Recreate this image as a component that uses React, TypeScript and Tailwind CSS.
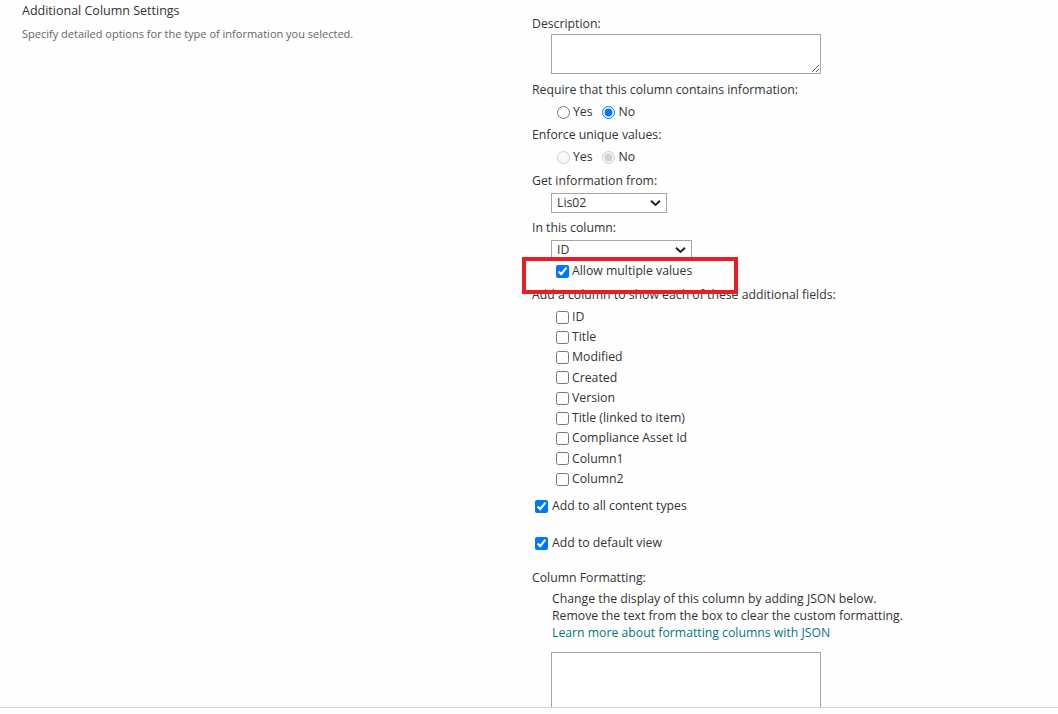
import React from 'react';

const fields = [
  'ID',
  'Title',
  'Modified',
  'Created',
  'Version',
  'Title (linked to item)',
  'Compliance Asset Id',
  'Column1',
  'Column2',
];

const Chevron = () => (
  <svg
    className="pointer-events-none absolute right-[6px] top-1/2 -translate-y-1/2"
    width="11"
    height="7"
    viewBox="0 0 11 7"
  >
    <path d="M1 1.2 L5.5 5.4 L10 1.2" fill="none" stroke="#222" strokeWidth="2" />
  </svg>
);

const Select = ({ value, width }: { value: string; width: string }) => (
  <div className={`relative ml-[19px] h-[20px] ${width}`}>
    <select
      defaultValue={value}
      className="h-full w-full appearance-none border border-[#a6a6a6] bg-white pl-[5px] text-[12.25px] leading-none text-[#333] outline-none"
    >
      <option>{value}</option>
    </select>
    <Chevron />
  </div>
);

const App: React.FC = () => {
  return (
    <div
      className="h-[714px] overflow-hidden bg-[#fefefe] text-[#333]"
      style={{ fontFamily: '"Open Sans", "Noto Sans", sans-serif' }}
    >
      <div className="flex h-[708px] overflow-hidden border-b border-[#d4d4d4]">
        {/* Section description */}
        <div className="w-[532px] shrink-0 pl-[22px] pt-[2px]">
          <h3 className="h-[18px] text-[12.5px] leading-[18px] text-[#333]">
            Additional Column Settings
          </h3>
          <p className="mt-[7px] text-[11px] leading-[14px] text-[#666]">
            Specify detailed options for the type of information you selected.
          </p>
        </div>

        {/* Form fields */}
        <div className="relative flex-1 pt-[14px] text-[12.25px]">
          <div className="flex h-[20px] items-center">Description:</div>
          <textarea className="ml-[19px] mt-[0px] block h-[40px] w-[270px] border border-[#a6a6a6] bg-white outline-none" />

          <div className="mt-[5px] flex h-[22px] items-center">
            Require that this column contains information:
          </div>
          <div className="flex h-[22px] items-center pl-[25px]">
            <input type="radio" name="req" className="m-0 h-[13px] w-[13px]" />
            <span className="ml-[3px]">Yes</span>
            <input type="radio" name="req" defaultChecked className="m-0 ml-[9px] h-[13px] w-[13px]" />
            <span className="ml-[4px]">No</span>
          </div>

          <div className="mt-[1px] flex h-[22px] items-center">Enforce unique values:</div>
          <div className="flex h-[22px] items-center pl-[25px]">
            <input type="radio" name="uniq" disabled className="m-0 h-[13px] w-[13px]" />
            <span className="ml-[3px]">Yes</span>
            <input type="radio" name="uniq" disabled defaultChecked className="m-0 ml-[9px] h-[13px] w-[13px]" />
            <span className="ml-[4px]">No</span>
          </div>

          <div className="mt-[2px] flex h-[22px] items-center">Get information from:</div>
          <div className="mt-[1px]">
            <Select value="Lis02" width="w-[116px]" />
          </div>

          <div className="mt-[4px] flex h-[22px] items-center">In this column:</div>
          <div className="mt-[1px]">
            <Select value="ID" width="w-[141px]" />
          </div>
          <div className="flex h-[22px] items-center pl-[24px]">
            <input type="checkbox" defaultChecked className="m-0 h-[13px] w-[13px]" />
            <span className="ml-[3px]">Allow multiple values</span>
          </div>

          <div className="mt-[2px] flex h-[22px] items-center">
            Add a column to show each of these additional fields:
          </div>
          <div className="mt-[1px]">
            {fields.map((f) => (
              <div key={f} className="flex h-[20.25px] items-center pl-[24px]">
                <input type="checkbox" className="m-0 h-[13px] w-[13px]" />
                <span className="ml-[3px]">{f}</span>
              </div>
            ))}
          </div>

          <div className="mt-[6px] flex h-[22px] items-center pl-[3px]">
            <input type="checkbox" defaultChecked className="m-0 h-[13px] w-[13px]" />
            <span className="ml-[4px]">Add to all content types</span>
          </div>
          <div className="mt-[15px] flex h-[22px] items-center pl-[3px]">
            <input type="checkbox" defaultChecked className="m-0 h-[13px] w-[13px]" />
            <span className="ml-[4px]">Add to default view</span>
          </div>

          <div className="mt-[13px] flex h-[22px] items-center">Column Formatting:</div>
          <div className="mt-[1px] pl-[20px] leading-[17px]">
            <p>Change the display of this column by adding JSON below.</p>
            <p>Remove the text from the box to clear the custom formatting.</p>
            <a href="#" className="text-[#03787c]">
              Learn more about formatting columns with JSON
            </a>
          </div>
          <textarea className="ml-[19px] mt-[11px] block h-[90px] w-[270px] resize-none border border-[#a6a6a6] bg-white outline-none" />

          {/* highlight annotation */}
          <div className="pointer-events-none absolute left-[-10px] top-[257px] h-[37px] w-[216px] border-4 border-[#ec1c24]" />
        </div>
      </div>
    </div>
  );
};

export default App;
